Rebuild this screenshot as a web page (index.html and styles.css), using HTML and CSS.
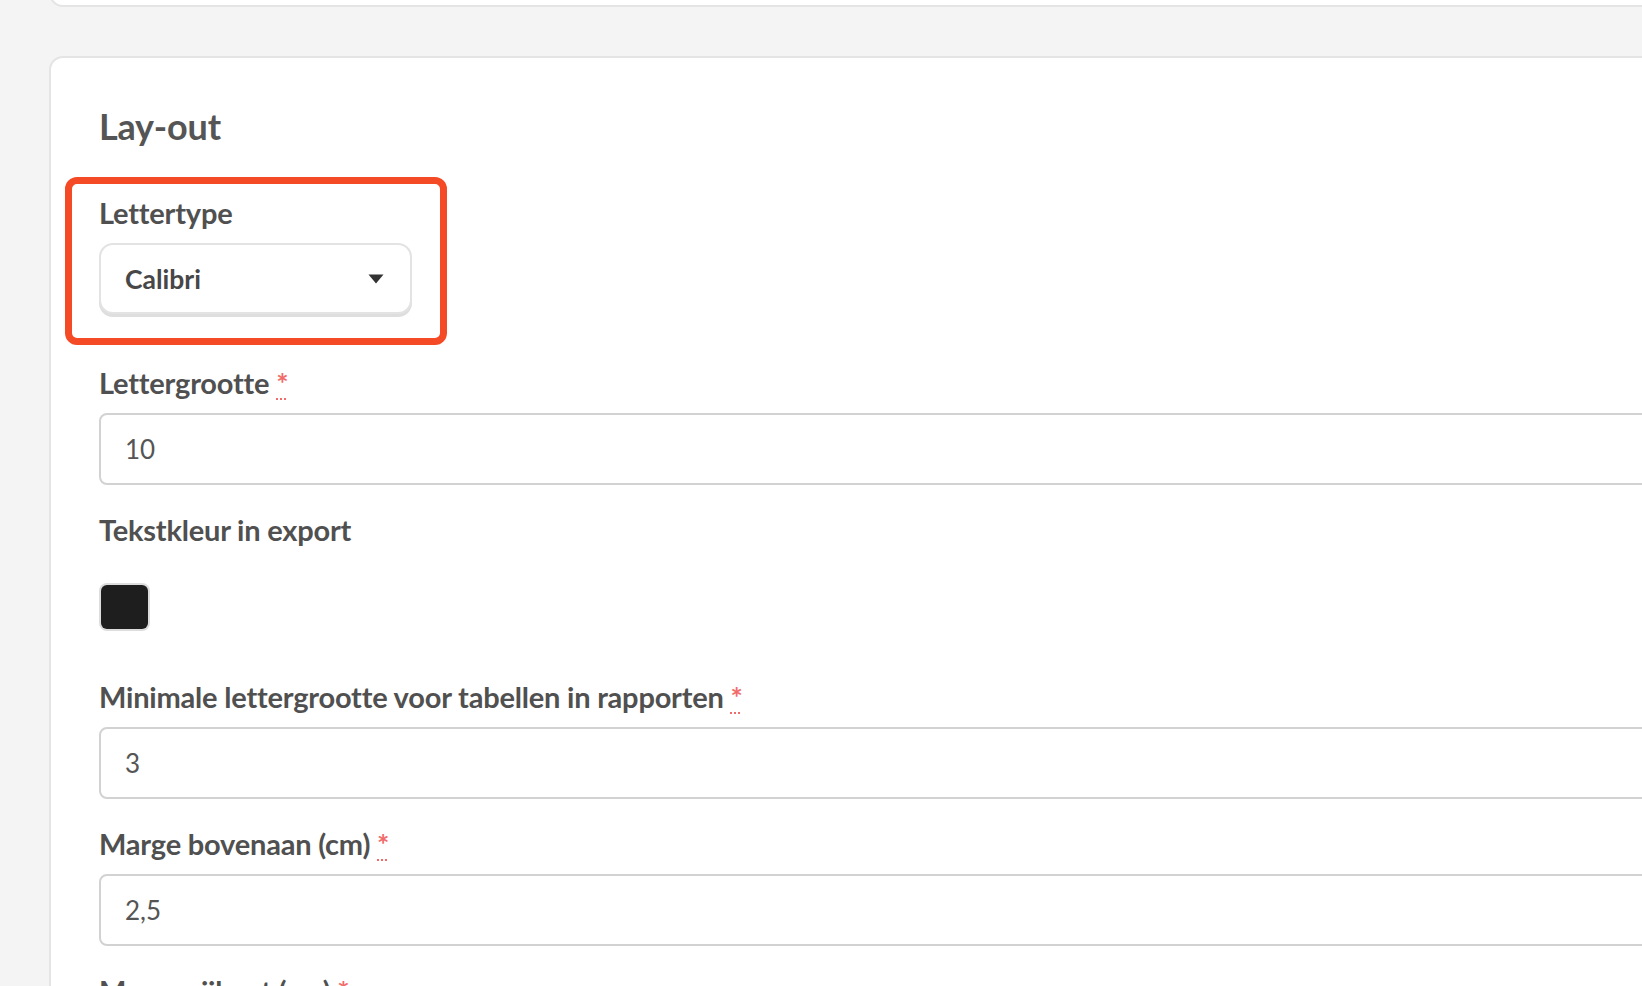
FILE: index.html
```html
<!DOCTYPE html>
<html lang="nl">
<head>
<meta charset="utf-8">
<title>Lay-out</title>
<link rel="stylesheet" href="styles.css">
</head>
<body>
<div class="page">
  <div class="card card-top"></div>
  <section class="card">
    <h2 class="card-title">Lay-out</h2>

    <div class="highlight">
      <div class="field field-select">
        <label class="label">Lettertype</label>
        <div class="select">
          <span class="select-value">Calibri</span>
          <svg class="caret" width="16" height="10" viewBox="0 0 16 10" aria-hidden="true"><path d="M0.5 0.5 H15.5 L8 9.5 Z" fill="#333"/></svg>
        </div>
      </div>
    </div>

    <div class="field">
      <label class="label">Lettergrootte <abbr class="req" title="verplicht">*</abbr></label>
      <input class="input" type="text" value="10">
    </div>

    <div class="field field-color">
      <label class="label">Tekstkleur in export</label>
      <div class="swatch"><span class="swatch-fill"></span></div>
    </div>

    <div class="field">
      <label class="label">Minimale lettergrootte voor tabellen in rapporten <abbr class="req" title="verplicht">*</abbr></label>
      <input class="input" type="text" value="3">
    </div>

    <div class="field">
      <label class="label">Marge bovenaan (cm) <abbr class="req" title="verplicht">*</abbr></label>
      <input class="input" type="text" value="2,5">
    </div>

    <div class="field">
      <label class="label">Marge zijkant (cm) <abbr class="req" title="verplicht">*</abbr></label>
      <input class="input" type="text" value="2">
    </div>
  </section>
</div>
</body>
</html>
```

FILE: styles.css
```css
html, body {
  margin: 0;
  padding: 0;
  height: 986px;
  overflow: hidden;
  background: #f4f4f4;
}

body {
  font-family: "Lato", "Open Sans", "Liberation Sans", sans-serif;
  color: #505050;
}

.page {
  padding-left: 49px;
}

.card {
  background: #ffffff;
  border: 2px solid #e4e4e4;
  border-radius: 14px;
  margin-right: -80px;
  padding: 44px 48px 0 48px;
}

.card-top {
  height: 60px;
  margin-top: -53px;
  padding: 0;
  box-sizing: border-box;
}

.card + .card {
  margin-top: 49px;
}

.card-title {
  margin: 0;
  font-size: 36px;
  line-height: 48px;
  font-weight: 700;
  color: #555555;
  letter-spacing: -0.2px;
}

.highlight {
  width: fit-content;
  margin: 27px 0 20px -34px;
  padding: 11px 28px 24px 27px;
  border: 7px solid #f44a25;
  border-radius: 12px;
}

.field {
  margin-bottom: 27px;
}

.field-select {
  margin-bottom: 0;
}

.label {
  display: block;
  font-size: 29px;
  line-height: 36px;
  font-weight: 700;
  letter-spacing: -0.2px;
  color: #505050;
  margin-bottom: 12px;
  white-space: nowrap;
}

.req {
  color: #f26b6b;
  font-weight: 700;
  text-decoration: underline dotted #f26b6b;
  text-decoration-thickness: 2px;
  text-underline-offset: 4px;
  cursor: help;
}

.select {
  box-sizing: border-box;
  width: 313px;
  height: 71px;
  display: flex;
  align-items: center;
  justify-content: space-between;
  padding: 0 26px 0 24px;
  border: 2px solid #e3e3e3;
  border-radius: 14px;
  box-shadow: 0 3px 0 #dedede;
  background: #ffffff;
}

.select-value {
  font-size: 26.5px;
  font-weight: 700;
  color: #474747;
}

.caret {
  display: block;
}

.input {
  display: block;
  box-sizing: border-box;
  width: 100%;
  height: 72px;
  margin: 0;
  padding: 0 24px;
  border: 2px solid #d2d2d2;
  border-radius: 8px;
  background: #ffffff;
  font-family: "Lato", "Open Sans", "Liberation Sans", sans-serif;
  font-size: 26px;
  color: #555555;
  outline: none;
}

.field-color {
  margin-bottom: 48px;
}

.field-color .label {
  margin-bottom: 35px;
}

.swatch {
  box-sizing: border-box;
  width: 51px;
  height: 48px;
  padding: 2px;
  border-radius: 8px;
  background: #dddddd;
}

.swatch-fill {
  display: block;
  width: 100%;
  height: 100%;
  border-radius: 6px;
  background: #1e1e1e;
}
```
